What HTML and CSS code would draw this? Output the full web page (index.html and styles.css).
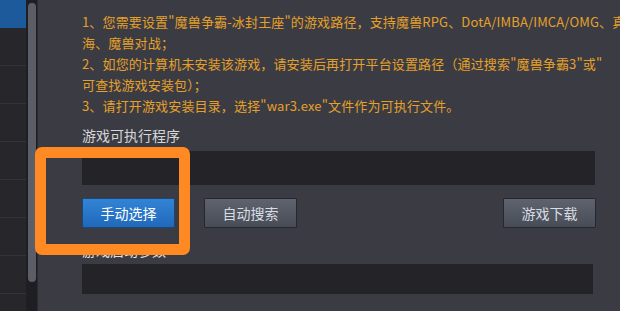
FILE: index.html
```html
<!DOCTYPE html>
<html lang="zh-CN">
<head>
<meta charset="utf-8">
<link rel="stylesheet" href="styles.css">
</head>
<body>
<div class="app">
  <div class="list">
    <div class="row row-active"></div>
    <div class="row"></div>
    <div class="row"></div>
    <div class="row"></div>
    <div class="row"></div>
    <div class="row"></div>
    <div class="row"></div>
    <div class="row"></div>
    <div class="row"></div>
  </div>
  <div class="scroll"><div class="thumb"></div></div>
  <div class="main">
    <div class="tips">
      <p>1、您需要设置"魔兽争霸-冰封王座"的游戏路径，支持魔兽RPG、DotA/IMBA/IMCA/OMG、真</p>
      <p>海、魔兽对战；</p>
      <p>2、如您的计算机未安装该游戏，请安装后再打开平台设置路径（通过搜索"魔兽争霸3"或"</p>
      <p>可查找游戏安装包）；</p>
      <p>3、请打开游戏安装目录，选择"war3.exe"文件作为可执行文件。</p>
    </div>
    <div class="label">游戏可执行程序</div>
    <div class="input"></div>
    <div class="buttons">
      <button class="btn btn-blue">手动选择</button>
      <button class="btn btn-grey">自动搜索</button>
      <button class="btn btn-grey btn-right">游戏下载</button>
    </div>
    <div class="label label2">游戏启动参数</div>
    <div class="input input2"></div>
  </div>
  <div class="highlight"></div>
</div>
</body>
</html>
```
FILE: styles.css
```css
* { box-sizing: border-box; }
html, body { margin: 0; padding: 0; }
body {
  width: 620px;
  height: 311px;
  overflow: hidden;
  background: #3b3c43;
  font-family: "Noto Sans CJK SC", "Noto Sans", sans-serif;
}
.app {
  position: relative;
  display: flex;
  width: 620px;
  height: 311px;
  overflow: hidden;
}
.list {
  width: 26px;
  background: #26262b;
  display: flex;
  flex-direction: column;
}
.row {
  height: 38px;
  flex: none;
  border-bottom: 1px solid #333339;
}
.row-active {
  height: 28px;
  background: #1d5a9c;
  border-bottom: none;
}
.scroll {
  width: 12px;
  background: #1f1f23;
  border-right: 1px solid #2b2b30;
  padding: 3px 2px 0 2px;
}
.thumb {
  width: 8px;
  height: 279px;
  border-radius: 4px;
  background: #5c5e67;
}
.main {
  flex: 1;
  min-width: 0;
  overflow: hidden;
  padding: 11px 25px 0 44px;
  background: #3b3c43;
}
.tips p {
  margin: 0;
  white-space: nowrap;
  font-size: 13px;
  line-height: 21px;
  letter-spacing: 0.15px;
  color: #e6a02a;
}
.label {
  margin-top: 9px;
  font-size: 14px;
  line-height: 20px;
  color: #d6d6d8;
}
.input {
  margin-top: 6px;
  height: 34px;
  background: #232328;
}
.buttons {
  display: flex;
  gap: 29px;
  margin-top: 13px;
  width: 514px;
}
.btn {
  width: 93px;
  height: 30px;
  font-family: inherit;
  font-size: 14px;
  padding: 0;
  border-radius: 1px;
  cursor: pointer;
}
.btn-blue {
  background: linear-gradient(#3384d6, #2068ba);
  border: 1px solid #1a467a;
  color: #ffffff;
}
.btn-grey {
  background: linear-gradient(#5e636e, #474c57);
  border: 1px solid #25272d;
  color: #d9dde3;
}
.btn-right { margin-left: auto; }
.label2 {
  margin-top: 12px;
  color: #e0e0e0;
}
.input2 {
  margin-top: 4px;
  height: 30px;
  width: 511px;
}
.highlight {
  position: absolute;
  left: 35px;
  top: 147px;
  width: 155px;
  height: 108px;
  border: 11px solid #ff8a24;
  border-radius: 7px;
}
```
